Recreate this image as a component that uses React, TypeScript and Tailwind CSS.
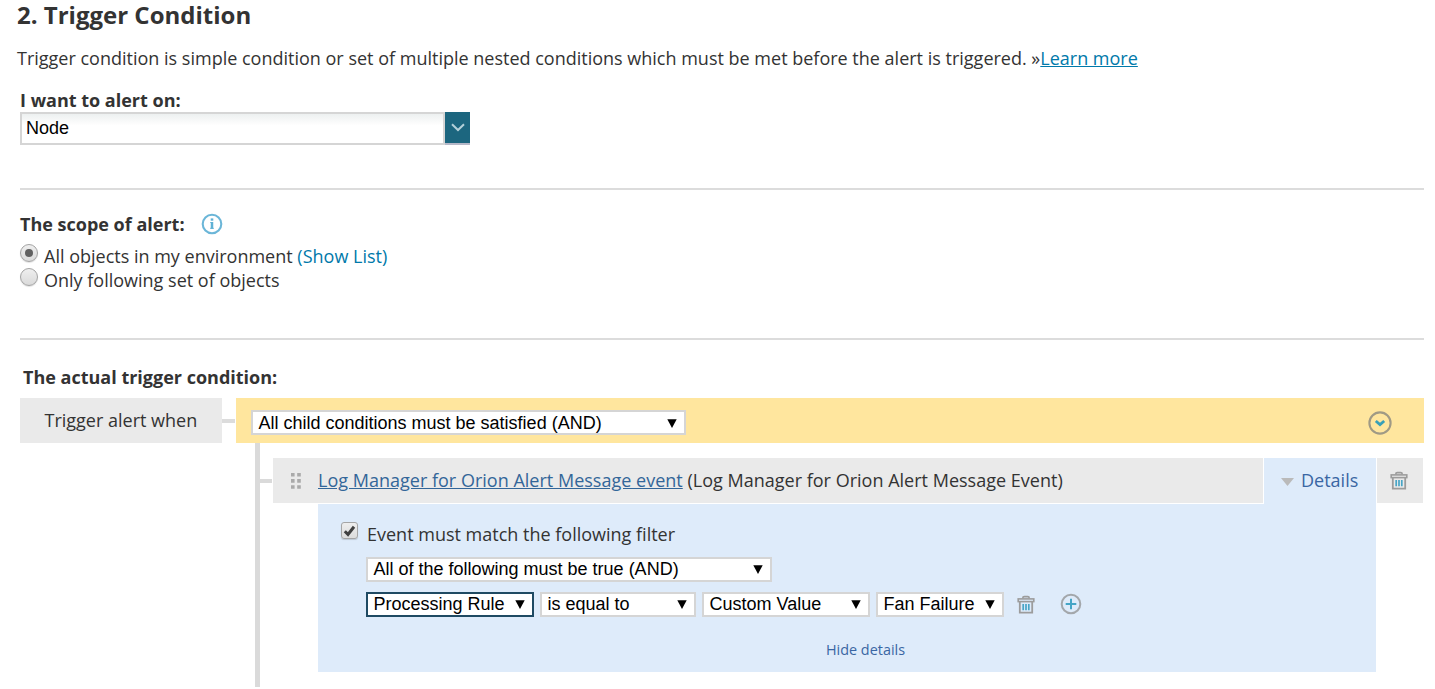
import type { ReactNode } from "react";

function SelectBox({ children, className }: { children: ReactNode; className: string }) {
  return (
    <div
      className={`flex h-[25px] shrink-0 items-center justify-between border-2 bg-white pl-[5.5px] pr-[7.5px] font-['Liberation_Sans',Arial,sans-serif] text-[18px] leading-[21px] whitespace-nowrap text-black ${className}`}
    >
      <span>{children}</span>
      <svg width="10" height="9" viewBox="0 0 10 9" className="shrink-0">
        <path d="M0.3 0.3h9.4L5 9z" fill="#000" />
      </svg>
    </div>
  );
}

function TrashIcon() {
  return (
    <svg width="18" height="19" viewBox="0 0 18 19" fill="none" className="shrink-0">
      <path d="M5.8 3.6V2.9c0-.8.6-1.3 1.4-1.3h3.6c.8 0 1.4.5 1.4 1.3v.7" stroke="#9c9c9c" strokeWidth="1.6" />
      <rect x="1.2" y="3.9" width="15.6" height="2.7" stroke="#9c9c9c" strokeWidth="1.6" />
      <path d="M2.8 6.8v10.8h12.4V6.8" stroke="#9c9c9c" strokeWidth="1.8" />
      <path d="M6.2 9v6.3M9 9v6.3M11.8 9v6.3" stroke="#48a5c6" strokeWidth="1.7" />
    </svg>
  );
}

function Radio({ checked }: { checked?: boolean }) {
  return (
    <span className="flex size-[18px] shrink-0 items-center justify-center rounded-full border border-[#a3a3a3] bg-linear-to-b from-[#efefef] to-[#dadada] shadow-[0_1px_1px_rgba(0,0,0,0.12)]">
      {checked && <span className="size-[8px] rounded-full bg-[#606060]" />}
    </span>
  );
}

export default function App() {
  return (
    <main className="h-[689px] w-[1435px] bg-white pr-[11px] pl-5 font-['Open_Sans',sans-serif] text-[18px] leading-6 whitespace-nowrap text-[#333]">
      <h1 className="-ml-[3px] text-[24px] leading-[30px] font-bold">2. Trigger Condition</h1>
      <p className="mt-4 -ml-[3px]">
        Trigger condition is simple condition or set of multiple nested conditions which must be met before the alert is triggered. »
        <a className="text-[#0079aa] underline">Learn more</a>
      </p>

      <h2 className="mt-[18px] font-bold">I want to alert on:</h2>
      <div className="flex h-[33px] w-[450px]">
        <div className="flex-1 border-2 border-[#d5d5d5] bg-linear-to-b from-[#edf0f0] to-white to-40% pl-1 font-['Liberation_Sans',Arial,sans-serif] leading-[28px] text-black">
          Node
        </div>
        <div className="flex w-[25px] items-center justify-center border-b-2 border-[#b5b8c8] bg-[#1c667f]">
          <svg width="14" height="9" viewBox="0 0 14 9" fill="none">
            <path d="M1 1.3l6 5.7 6-5.7" stroke="#b4d0d9" strokeWidth="2" />
          </svg>
        </div>
      </div>

      <hr className="mt-[43px] h-[2px] border-0 bg-[#dcdcdc]" />

      <div className="mt-[22px] flex items-center">
        <h2 className="w-[181px] font-bold">The scope of alert:</h2>
        <svg width="22" height="22" viewBox="0 0 22 22" fill="none">
          <circle cx="11" cy="11" r="9.3" stroke="#6bb6d8" strokeWidth="2.1" />
          <path d="M11 5.4v2.3" stroke="#5fb1d5" strokeWidth="2.6" />
          <path d="M9.3 9.5H11M9.2 15.3h3.6" stroke="#5fb1d5" strokeWidth="1" />
          <path d="M11 9v6.8" stroke="#5fb1d5" strokeWidth="2.5" />
        </svg>
      </div>
      <div className="mt-2 flex gap-[6px]">
        <Radio checked />
        <span>
          All objects in my environment <a className="text-[#0079aa]">(Show List)</a>
        </span>
      </div>
      <div className="flex gap-[6px]">
        <Radio />
        <span>Only following set of objects</span>
      </div>

      <hr className="mt-[46px] h-[2px] border-0 bg-[#dcdcdc]" />

      <h2 className="mt-[25px] ml-[3px] font-bold">The actual trigger condition:</h2>
      <div className="mt-[9px] flex h-[45px]">
        <div className="w-[202px] bg-[#eaeaea] pl-[24.5px] leading-[44px]">Trigger alert when</div>
        <div className="mt-[21px] mr-[1px] h-1 w-[13px] bg-[#dcdcdc]" />
        <div className="flex flex-1 items-center justify-between bg-[#ffe69e] pt-1 pr-8 pl-[15px]">
          <SelectBox className="w-[435px] border-[#d5d5d5] pt-px">All child conditions must be satisfied (AND)</SelectBox>
          <svg width="24" height="24" viewBox="0 0 24 24" fill="none">
            <circle cx="12" cy="12" r="10.6" stroke="#a09a85" strokeWidth="2.1" />
            <path d="M7.8 10l4.2 3.6 4.2-3.6" stroke="#38a0b8" strokeWidth="2.8" />
          </svg>
        </div>
      </div>

      <div className="ml-[235px] flex">
        <div className="h-[244px] w-[5px] bg-[#dadada]" />
        <div className="mt-9 mr-[1px] h-1 w-[12px] bg-[#dadada]" />
        <div className="mt-[15px] w-[1150px]">
          <div className="flex h-[45px]">
            <div className="flex w-[990px] bg-[#eaeaea] pl-[18px] leading-[44px]">
              <svg width="10" height="16" viewBox="0 0 10 16" fill="#aaa" className="mt-[15px] mr-[17px]">
                <path d="M0 0h3.6v3.6H0zM6.2 0h3.6v3.6H6.2zM0 6.1h3.6v3.6H0zM6.2 6.1h3.6v3.6H6.2zM0 12.2h3.6v3.6H0zM6.2 12.2h3.6v3.6H6.2z" />
              </svg>
              <span className="tracking-[0.01px]">
                <a className="text-[#336699] underline">Log Manager for Orion Alert Message event</a> (Log Manager for Orion Alert Message Event)
              </span>
            </div>
            <div className="ml-[1px] flex h-[46px] w-[112px] bg-[#deebfa] pl-[17px] leading-[44px] text-[#3a66a3]">
              <svg width="13" height="8" viewBox="0 0 13 8" className="mt-[20px] mr-[7px]">
                <path d="M0 0h13L6.5 8z" fill="#bababa" />
              </svg>
              Details
            </div>
            <div className="ml-[1px] flex w-[46px] items-center justify-center bg-[#eaeaea] pr-[2px]">
              <TrashIcon />
            </div>
          </div>
          <div className="mt-[1px] ml-[45px] h-[168px] w-[1058px] bg-[#deebfa] pt-[18px] pl-[23px]">
            <div className="flex">
              <span className="flex size-[17px] shrink-0 items-center justify-center rounded-[3px] border border-[#a5a5a5] bg-linear-to-b from-[#eee] to-[#dcdcdc] shadow-[0_1px_1px_rgba(0,0,0,0.15)]">
                <svg width="13" height="12" viewBox="0 0 13 12" fill="none">
                  <path d="M1.8 6.2l3.2 3.2L11 1.8" stroke="#404040" strokeWidth="3" />
                </svg>
              </span>
              <span className="ml-[9px]">Event must match the following filter</span>
            </div>
            <div className="mt-[11px] ml-[25px] flex">
              <SelectBox className="w-[406px] border-[#d5d5d5]">All of the following must be true (AND)</SelectBox>
            </div>
            <div className="mt-[10px] ml-[25px] flex items-center gap-[6px]">
              <SelectBox className="w-[168px] border-[#1f4a63]">Processing Rule</SelectBox>
              <SelectBox className="w-[156px] border-[#d5d5d5]">is equal to</SelectBox>
              <SelectBox className="w-[168px] border-[#d5d5d5]">Custom Value</SelectBox>
              <SelectBox className="w-[128px] border-[#d5d5d5]">Fan Failure</SelectBox>
              <span className="ml-[7px] flex">
                <TrashIcon />
              </span>
              <svg width="22" height="22" viewBox="0 0 22 22" fill="none" className="mb-[2px] ml-[19px]">
                <circle cx="11" cy="11" r="9.3" stroke="#a3a7ab" strokeWidth="2" />
                <path d="M11 5.7v10.6M5.7 11h10.6" stroke="#45a5c6" strokeWidth="2" />
              </svg>
            </div>
            <div className="mt-[21px] ml-[485px] text-[14.4px] text-[#3a66a3]">Hide details</div>
          </div>
        </div>
      </div>
    </main>
  );
}
